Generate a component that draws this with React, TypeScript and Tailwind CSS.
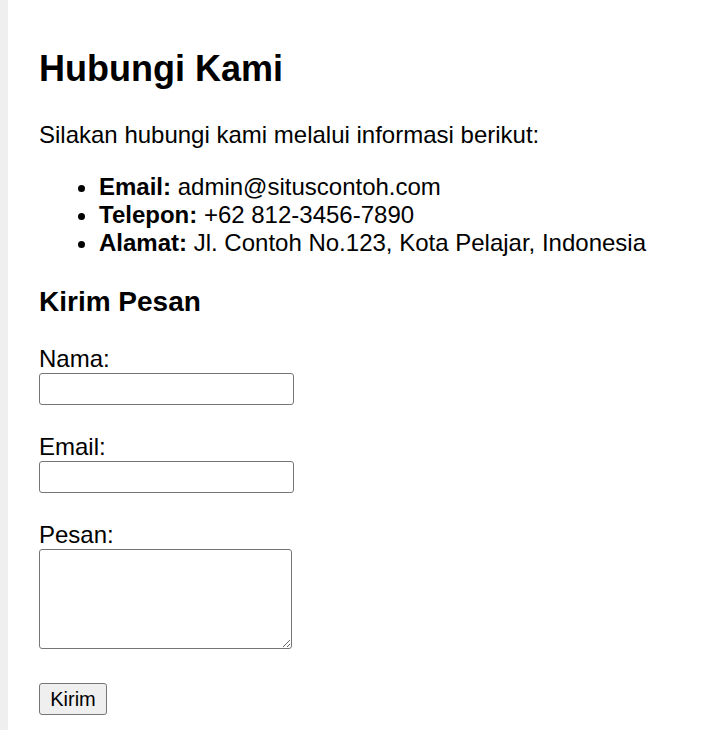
import React from 'react';

const contactInfo = [
  { label: 'Email:', value: 'admin@situscontoh.com' },
  { label: 'Telepon:', value: '+62 812-3456-7890' },
  { label: 'Alamat:', value: 'Jl. Contoh No.123, Kota Pelajar, Indonesia' },
];

const fieldClass =
  'block w-[255px] h-[32px] border border-[#767676] rounded-[3px] bg-white px-1';

const App: React.FC = () => {
  return (
    <div className="flex min-h-[730px] bg-white text-black font-['Liberation_Sans',Arial,sans-serif]">
      <div className="w-[8px] shrink-0 bg-[#efefef]"></div>
      <div className="pl-[31px] pt-[49px]">
        <h1 className="text-[36px] font-bold leading-[40px]">Hubungi Kami</h1>

        <p className="mt-[32px] text-[24px] leading-[28px]">
          Silakan hubungi kami melalui informasi berikut:
        </p>

        <ul className="mt-[24px] list-disc pl-[60px] text-[24px] leading-[28px]">
          {contactInfo.map((item, index) => (
            <li key={index}>
              <strong className="font-bold">{item.label}</strong> {item.value}
            </li>
          ))}
        </ul>

        <h2 className="mt-[29px] text-[28px] font-bold leading-[32px]">Kirim Pesan</h2>

        <form className="mt-[27px] text-[24px] leading-[28px]">
          <label className="block">Nama:</label>
          <input type="text" className={fieldClass} />

          <label className="block mt-[28px]">Email:</label>
          <input type="email" className={fieldClass} />

          <label className="block mt-[28px]">Pesan:</label>
          <textarea className="block w-[253px] h-[100px] border border-[#767676] rounded-[3px] bg-white px-1"></textarea>

          <button
            type="button"
            className="mt-[34px] h-[32px] w-[68px] border border-[#767676] rounded-[3px] bg-[#efefef] text-[20px] leading-[28px]"
          >
            Kirim
          </button>
        </form>
      </div>
    </div>
  );
};

export default App;
